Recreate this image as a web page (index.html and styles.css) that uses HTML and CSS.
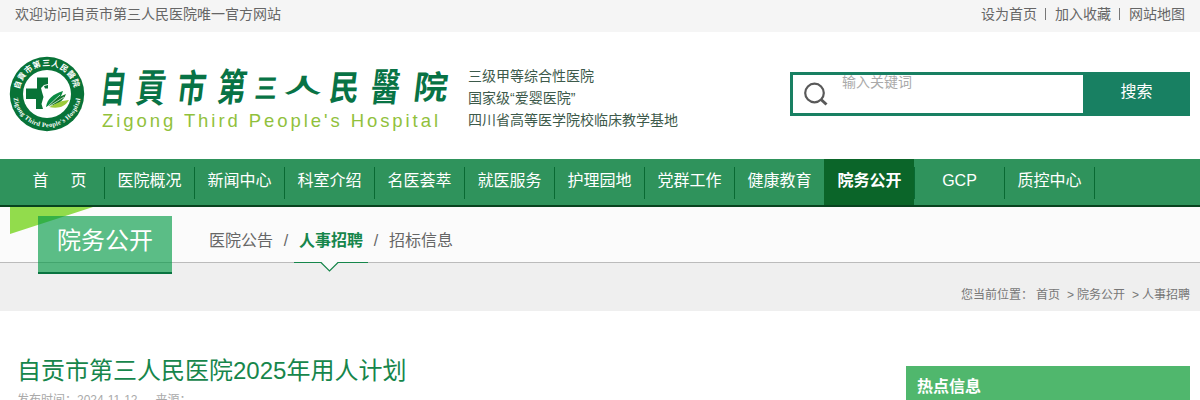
FILE: index.html
```html
<!DOCTYPE html>
<html lang="zh-CN">
<head>
<meta charset="utf-8">
<title>自贡市第三人民医院</title>
<link rel="stylesheet" href="styles.css">
</head>
<body>
<div class="topbar">
  <span>欢迎访问自贡市第三人民医院唯一官方网站</span>
  <div class="topbar-links"><a>设为首页</a><i></i><a>加入收藏</a><i></i><a>网站地图</a></div>
</div>

<header class="header">
  <svg class="brand" width="460" height="90" viewBox="0 50 460 90">
    <defs>
      <path id="arc-top" d="M19.500 89.500A27.800 27.800 0 0 1 74.500 89.500"/>
      <path id="arc-bottom" d="M13.400 97A33.800 33.800 0 0 0 80.600 97"/>
    </defs>
    <circle cx="47" cy="94" r="37.2" fill="#087337"/>
    <circle cx="47" cy="94" r="24" fill="#fff"/>
    <text class="seal-cn"><textPath href="#arc-top" startOffset="0" textLength="77">自貢市第三人民醫院</textPath></text>
    <text class="seal-en"><textPath href="#arc-bottom" startOffset="1" textLength="96">Zigong Third People's Hospital</textPath></text>
    <path fill="#087337" d="M37 77.500H48V84L44 85L41 88L42 92L43.500 97L41.500 104L43 109H36V99H26V88.500H37Z"/>
    <path fill="#087337" d="M44 86L48 85V88.500H45Z"/>
    <path fill="#0b8b43" d="M46 107C47 99 53 94 63 91C61 99 55 104 46 107Z"/>
    <path fill="#14742c" d="M48 106C53 101 58 97 66 94C63 102 57 105 48 106Z"/>
    <path fill="#9ccb3b" d="M49 107C56 104 59 101 69 100C65 107 58 109 49 107Z"/>
    <path stroke="#fff" stroke-width=".7" fill="none" d="M47 107L60 95M48 107L64 97"/>
    <g class="brand-cn">
      <text transform="translate(112 101.500) skewX(-7) scale(.73 1.200)">自</text>
      <text transform="translate(149.500 102) skewX(-7) scale(.88 1.160)">貢</text>
      <text transform="translate(190 102) skewX(-7) scale(.84 1.120)">市</text>
      <text transform="translate(230.500 101) skewX(-7) scale(.84 1.120)">第</text>
      <text transform="translate(265 97.500) skewX(-7) scale(.65 .8)">三</text>
      <text transform="translate(302.500 93) skewX(-7) scale(1.120 .6)">人</text>
      <text transform="translate(343 100) skewX(-7) scale(.87 1.020)">民</text>
      <text transform="translate(384 100.500) skewX(-7) scale(.84 1.140)">醫</text>
      <text transform="translate(429.500 99) skewX(-7) scale(1 .96)">院</text>
    </g>
    <text class="brand-en" x="102" y="127" textLength="336">Zigong Third People's Hospital</text>
  </svg>
  <p class="slogan">三级甲等综合性医院<br>国家级“爱婴医院”<br>四川省高等医学院校临床教学基地</p>
  <div class="search">
    <svg class="search-icon" width="26" height="26" viewBox="0 0 26 26"><circle cx="11.500" cy="11" r="9.300" fill="none" stroke="#595959" stroke-width="2.200"/><path d="M18 17.500L23.500 22.500" stroke="#595959" stroke-width="3"/></svg>
    <span class="search-input">输入关键词</span>
    <span class="search-button">搜索</span>
  </div>
</header>

<ul class="nav">
  <li class="home"><span>首</span><span>页</span></li>
  <li>医院概况</li><li>新闻中心</li><li>科室介绍</li><li>名医荟萃</li><li>就医服务</li><li>护理园地</li><li>党群工作</li><li>健康教育</li><li class="active">院务公开</li><li>GCP</li><li>质控中心</li><li class="end"></li>
</ul>

<section class="subhead">
  <svg class="ribbon" width="84" height="28" viewBox="0 0 84 28"><path d="M0 0H83L0 27Z" fill="#92dc4c"/></svg>
  <h2 class="section-name">院务公开</h2>
  <div class="tabs">
    <a>医院公告</a><span class="slash">/</span>
    <a class="current">人事招聘<svg class="pointer" width="74" height="12" viewBox="0 0 74 12"><path d="M27.500 0H44L35.500 8.500Z" fill="#fbfbfb"/><path d="M0 .5H27L35.500 9L44 .5H74" fill="none" stroke="#16864b" stroke-width="1.200"/></svg></a>
    <span class="slash">/</span><a>招标信息</a>
  </div>
</section>
<div class="crumbs"><span>您当前位置：</span><a class="crumb-home">首页</a><span class="gt">&gt;</span><a class="crumb-mid">院务公开</a><span class="gt">&gt;</span><a>人事招聘</a></div>

<main class="content">
  <article>
    <h1>自贡市第三人民医院2025年用人计划</h1>
    <div class="meta"><span>发布时间：2024-11-12</span><span>来源：</span></div>
  </article>
  <aside class="hot">热点信息</aside>
</main>
</body>
</html>
```

FILE: styles.css
```css
* { box-sizing: border-box; }
body {
  margin: 0;
  height: 400px;
  overflow: hidden;
  background: #fff;
  color: #666;
  font: 14px/20px "Liberation Sans", "Noto Sans CJK SC", sans-serif;
}
h1, h2, p, ul { margin: 0; padding: 0; font-weight: normal; }

.topbar {
  display: flex;
  justify-content: space-between;
  height: 32px;
  padding: 4px 15px 0;
  background: #f5f5f5;
}
.topbar-links { display: flex; align-items: center; height: 20px; }
.topbar-links i { width: 1px; height: 12px; margin: 0 9px 0 8px; background: #777; }

.header { display: flex; height: 127px; }
.brand { flex: none; margin-top: 18px; }
.seal-cn { font: bold 8px "Noto Sans CJK TC", sans-serif; fill: #fff; }
.seal-en { font: bold 6.5px "Liberation Serif", serif; fill: #fff; }
.brand-cn { font: bold 34px "Noto Sans CJK TC", sans-serif; fill: #087345; text-anchor: middle; }
.brand-en { font: 18.5px "Liberation Sans", sans-serif; fill: #91c13c; }
.slogan {
  width: 322px;
  padding: 33px 0 0 8px;
  color: #3d5a4b;
  line-height: 22px;
}
.search {
  display: flex;
  width: 400px;
  height: 44px;
  margin: 40px 0 0 8px;
  border: 3px solid #188062;
}
.search-icon { margin: 7px 0 0 10px; }
.search-input { width: 254px; padding-left: 13px; color: #aaa; line-height: 14px; }
.search-button {
  flex: 1;
  padding-left: 3px;
  background: #188062;
  color: #fff;
  font-size: 16px;
  line-height: 33px;
  text-align: center;
}

.nav {
  display: flex;
  height: 48px;
  padding-left: 14px;
  background: #2f935c;
  border-bottom: 2px solid #08431f;
  list-style: none;
  color: #fff;
  font-size: 16px;
  line-height: 43px;
}
.nav li {
  flex: none;
  width: 90px;
  padding-left: 1px;
  text-align: center;
  background: linear-gradient(#096a33, #096a33) 0 8px / 1px 32px no-repeat;
}
.nav .home { display: flex; justify-content: center; gap: 22px; background: none; }
.nav .active { background: #0b6529; font-weight: bold; }
.nav .end { width: 1px; }

.subhead {
  position: relative;
  display: flex;
  height: 56px;
  padding-left: 38px;
  background: #fbfbfb;
  border-bottom: 1px solid #bbb;
}
.ribbon { position: absolute; left: 10px; top: 0; }
.section-name {
  position: relative;
  width: 134px;
  height: 58px;
  margin-top: 9px;
  background: rgba(0, 153, 68, .64);
  border-bottom: 2px solid #087440;
  color: #fff;
  font-size: 24px;
  line-height: 50px;
  text-align: center;
}
.tabs { display: flex; padding-left: 37px; font-size: 16px; line-height: 67px; }
.tabs .slash { width: 26px; text-align: center; }
.tabs .current { position: relative; color: #16864b; font-weight: bold; }
.pointer { position: absolute; left: -5px; top: 55px; }

.crumbs {
  display: flex;
  justify-content: flex-end;
  height: 48px;
  padding: 22px 10px 0 0;
  background: #efefef;
  color: #777;
  font-size: 12px;
  line-height: 21px;
}
.crumb-home { margin-left: 3px; }
.gt { margin: 0 3px 0 7px; }

.content { display: flex; justify-content: space-between; padding: 0 10px 0 17px; }
h1 { padding-top: 43px; color: #16864b; font-size: 24px; line-height: 33px; }
.meta { display: flex; gap: 18px; padding-top: 3px; color: #aaa; font-size: 12px; }
.hot {
  width: 284px;
  height: 50px;
  margin-top: 55px;
  padding-left: 11px;
  background: #50b76d;
  color: #fff;
  font-size: 16px;
  font-weight: bold;
  line-height: 41px;
}
```
